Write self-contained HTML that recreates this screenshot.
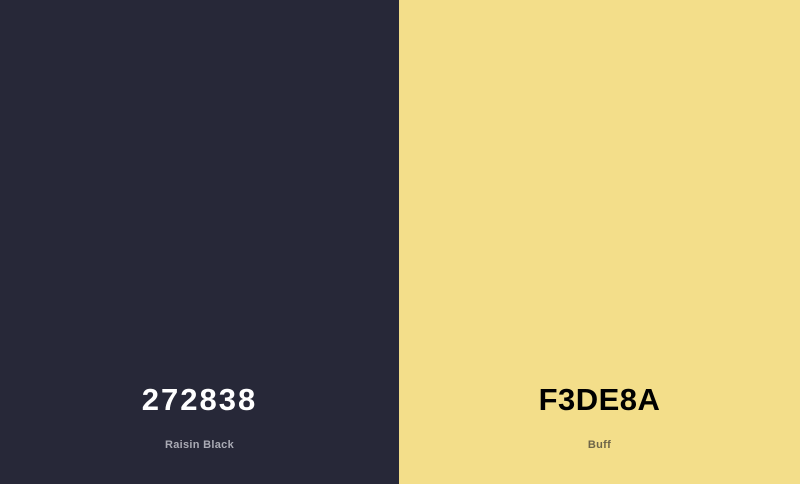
<!DOCTYPE html>
<html><head><style>
html,body{margin:0;padding:0;width:800px;height:484px;overflow:hidden;font-family:"Liberation Sans",sans-serif}
.p{position:absolute;top:0;height:484px}
.h{position:absolute;left:0;right:0;top:381px;text-align:center;font-size:31px;font-weight:bold;letter-spacing:1.2px;line-height:38px}
.n{position:absolute;left:0;right:0;top:438px;text-align:center;font-size:11px;font-weight:bold;line-height:14px;letter-spacing:0.3px}
</style></head><body>
<div class="p" style="left:0;width:399px;background:#272838">
<div class="h" style="color:#fff;letter-spacing:2px">272838</div>
<div class="n" style="color:#a9aab4">Raisin Black</div>
</div>
<div class="p" style="left:399px;width:401px;background:#f3de8a">
<div class="h" style="color:#000;letter-spacing:0.5px">F3DE8A</div>
<div class="n" style="color:#6e6548">Buff</div>
</div>
</body></html>
